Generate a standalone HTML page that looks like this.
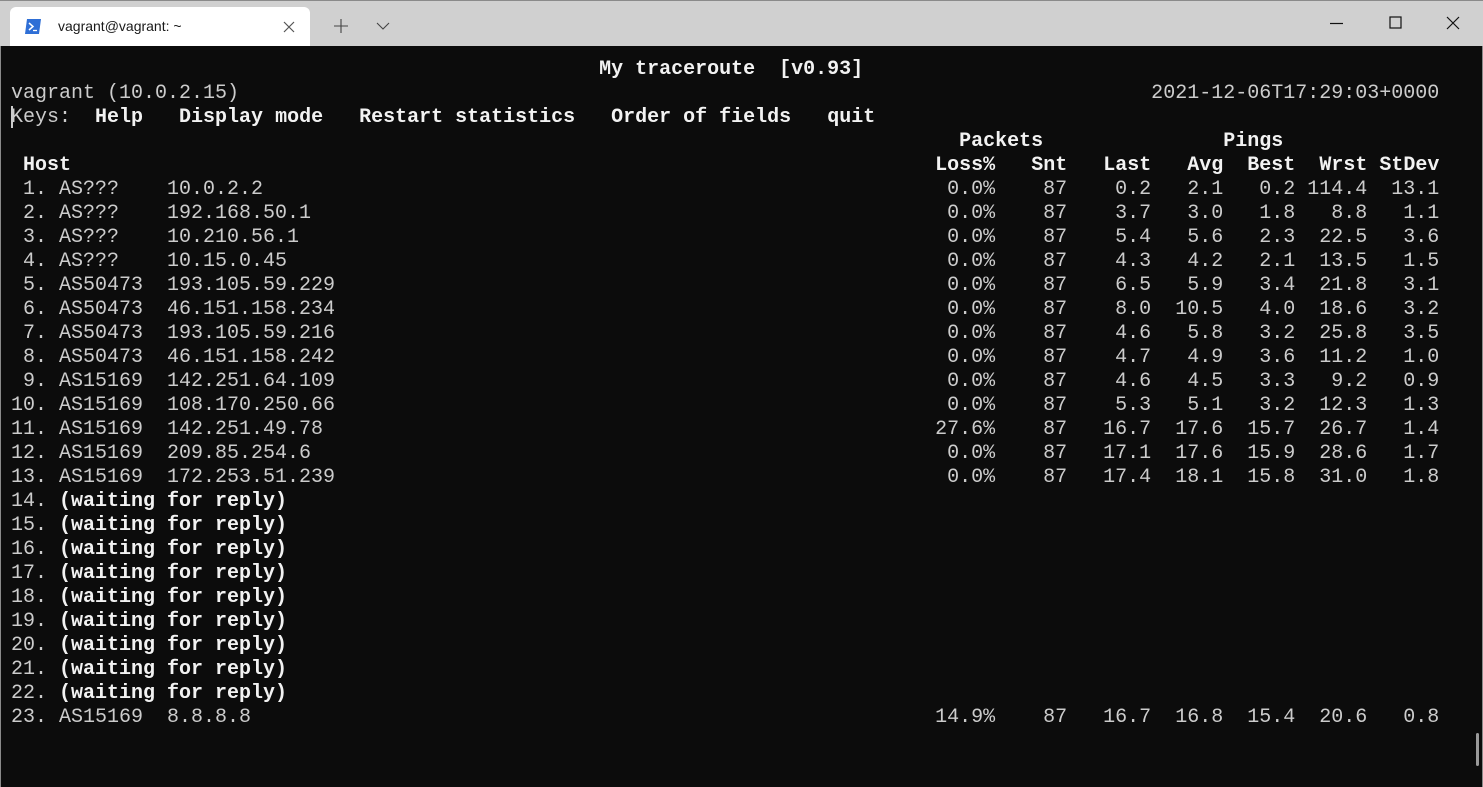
<!DOCTYPE html>
<html><head><meta charset="utf-8"><style>
html,body{margin:0;padding:0;width:1483px;height:787px;overflow:hidden;background:#0c0c0c;}
#tb{position:absolute;left:0;top:0;width:1483px;height:46px;background:#d0d0d0;border-top:1px solid #8a8a8a;box-sizing:border-box;}
#tab{position:absolute;left:10px;top:6px;width:300px;height:40px;background:#fff;border-radius:6px 6px 0 0;}
#tab .t{position:absolute;left:48px;top:11px;font:14px "Liberation Sans",sans-serif;color:#1a1a1a;}
#term{position:absolute;left:0;top:46px;width:1483px;height:741px;background:#0c0c0c;border-left:1px solid #8a8a8a;border-right:1px solid #8a8a8a;box-sizing:border-box;}
pre{position:absolute;left:11px;top:58px;margin:0;font:20px/24px "Liberation Mono",monospace;color:#cccccc;white-space:pre;}
b{color:#f2f2f2;font-weight:bold;}
</style></head><body>
<div id="tb">
 <div id="tab">
  <svg style="position:absolute;left:15px;top:12px" width="16" height="15" viewBox="0 0 16 15"><path d="M2 0H16L14 15H0Z" fill="#2f6fd6"/><path d="M4 4L8 7.5L4 11" stroke="#fff" stroke-width="1.5" fill="none"/><path d="M8 11.5H12" stroke="#fff" stroke-width="1.3"/></svg>
  <span class="t">vagrant@vagrant: ~</span>
  <svg style="position:absolute;left:273px;top:14px" width="12" height="12"><path d="M1 1L11 11M11 1L1 11" stroke="#555" stroke-width="1.2"/></svg>
 </div>
 <svg style="position:absolute;left:333px;top:17px" width="16" height="16"><path d="M8 1V15M1 8H15" stroke="#444" stroke-width="1.1"/></svg>
 <svg style="position:absolute;left:376px;top:21px" width="14" height="8"><path d="M1 1L7 7L13 1" stroke="#444" stroke-width="1.1" fill="none"/></svg>
 <svg style="position:absolute;left:1330px;top:21px" width="14" height="3"><path d="M0 1.5H13" stroke="#111" stroke-width="1.2"/></svg>
 <svg style="position:absolute;left:1389px;top:15px" width="14" height="14"><rect x="1" y="1" width="11" height="11" fill="none" stroke="#111" stroke-width="1.2"/></svg>
 <svg style="position:absolute;left:1446px;top:15px" width="14" height="14"><path d="M1 1L13 13M13 1L1 13" stroke="#111" stroke-width="1.2"/></svg>
</div>
<div id="term"></div>
<div style="position:absolute;left:11px;top:106px;width:2px;height:22px;background:#ccc"></div>
<div style="position:absolute;left:1476px;top:733px;width:3px;height:33px;background:#9a9a9a;border-radius:2px"></div>
<pre id="p"></pre>
<script>
function sp(n){return n>0?" ".repeat(n):"";}
function at(line,col,s){var cur=line.len; line.h+=sp(col-cur)+s.h; line.len=Math.max(cur,col)+s.n; return line;}
function T(t,bold){return {h:bold?"<b>"+t+"</b>":t,n:t.length};}
function L(){return {h:"",len:0};}
var out=[];
var l=L();at(l,49,T("My traceroute  [v0.93]",1));out.push(l.h);
l=L();at(l,0,T("vagrant (10.0.2.15)"));at(l,95,T("2021-12-06T17:29:03+0000"));out.push(l.h);
l=L();at(l,0,T("Keys:"));at(l,7,T("Help",1));at(l,14,T("Display mode",1));at(l,29,T("Restart statistics",1));at(l,50,T("Order of fields",1));at(l,68,T("quit",1));out.push(l.h);
l=L();at(l,79,T("Packets",1));at(l,101,T("Pings",1));out.push(l.h);
var ends=[81,87,94,100,106,112,118];
var hd=["Loss%","Snt","Last","Avg","Best","Wrst","StDev"];
l=L();at(l,1,T("Host",1));hd.forEach(function(h,i){at(l,ends[i]-h.length+1,T(h,1));});out.push(l.h);
var rows=[
["AS???","10.0.2.2","0.0%","87","0.2","2.1","0.2","114.4","13.1"],
["AS???","192.168.50.1","0.0%","87","3.7","3.0","1.8","8.8","1.1"],
["AS???","10.210.56.1","0.0%","87","5.4","5.6","2.3","22.5","3.6"],
["AS???","10.15.0.45","0.0%","87","4.3","4.2","2.1","13.5","1.5"],
["AS50473","193.105.59.229","0.0%","87","6.5","5.9","3.4","21.8","3.1"],
["AS50473","46.151.158.234","0.0%","87","8.0","10.5","4.0","18.6","3.2"],
["AS50473","193.105.59.216","0.0%","87","4.6","5.8","3.2","25.8","3.5"],
["AS50473","46.151.158.242","0.0%","87","4.7","4.9","3.6","11.2","1.0"],
["AS15169","142.251.64.109","0.0%","87","4.6","4.5","3.3","9.2","0.9"],
["AS15169","108.170.250.66","0.0%","87","5.3","5.1","3.2","12.3","1.3"],
["AS15169","142.251.49.78","27.6%","87","16.7","17.6","15.7","26.7","1.4"],
["AS15169","209.85.254.6","0.0%","87","17.1","17.6","15.9","28.6","1.7"],
["AS15169","172.253.51.239","0.0%","87","17.4","18.1","15.8","31.0","1.8"]];
for(var i=1;i<=23;i++){
 l=L();var n=(i<10?" ":"")+i+".";at(l,0,T(n));
 var r=null;if(i<=13)r=rows[i-1];if(i==23)r=["AS15169","8.8.8.8","14.9%","87","16.7","16.8","15.4","20.6","0.8"];
 if(r){at(l,4,T(r[0]));at(l,13,T(r[1]));for(var k=0;k<7;k++){var v=r[k+2];at(l,ends[k]-v.length+1,T(v));}}
 else at(l,4,T("(waiting for reply)",1));
 out.push(l.h);
}
document.getElementById("p").innerHTML=out.join("\n");
</script>
</body></html>
